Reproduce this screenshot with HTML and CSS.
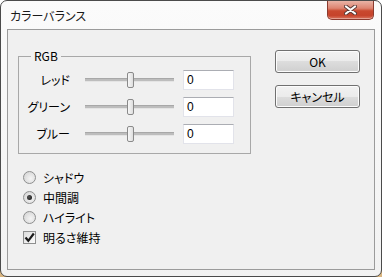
FILE: index.html
```html
<!DOCTYPE html>
<html lang="ja">
<head>
<meta charset="utf-8">
<link rel="stylesheet" href="styles.css">
</head>
<body>
<div class="window">
  <div class="titlebar">
    <span class="title">カラーバランス</span>
    <div class="close">
      <svg width="13" height="10" viewBox="0 0 13 10">
        <path d="M2 1.5 L11 8.5 M11 1.5 L2 8.5" stroke="#5a3a36" stroke-width="4" stroke-linecap="round"/>
        <path d="M2 1.5 L11 8.5 M11 1.5 L2 8.5" stroke="#ffffff" stroke-width="2.2" stroke-linecap="round"/>
      </svg>
    </div>
  </div>
  <div class="client">
    <div class="top">
      <fieldset class="group">
        <legend class="legend">RGB</legend>
        <div class="row">
          <span class="label">レッド</span>
          <div class="slider"><div class="track"></div><div class="thumb"></div></div>
          <div class="input">0</div>
        </div>
        <div class="row">
          <span class="label">グリーン</span>
          <div class="slider"><div class="track"></div><div class="thumb"></div></div>
          <div class="input">0</div>
        </div>
        <div class="row">
          <span class="label">ブルー</span>
          <div class="slider"><div class="track"></div><div class="thumb"></div></div>
          <div class="input">0</div>
        </div>
      </fieldset>
      <div class="buttons">
        <div class="btn">OK</div>
        <div class="btn">キャンセル</div>
      </div>
    </div>
    <div class="options">
      <div class="opt"><span class="radio"></span><span class="otext">シャドウ</span></div>
      <div class="opt"><span class="radio on"></span><span class="otext">中間調</span></div>
      <div class="opt"><span class="radio"></span><span class="otext">ハイライト</span></div>
      <div class="opt"><span class="check">
        <svg width="11" height="11" viewBox="0 0 11 11"><path d="M1.5 5.5 L4.3 8.8 L9.8 1.5" fill="none" stroke="#1a1a1a" stroke-width="2.2"/></svg>
      </span><span class="otext">明るさ維持</span></div>
    </div>
  </div>
</div>
</body>
</html>
```

FILE: styles.css
```css
html {
  background: linear-gradient(#ffffff 0%, #ffffff 50%, #d9b47e 100%);
}
body {
  margin: 0;
  font-family: "Noto Sans CJK JP", "Liberation Sans", sans-serif;
  font-size: 12px;
  color: #000;
  font-feature-settings: "palt";
}
.window {
  width: 382px;
  height: 277px;
  box-sizing: border-box;
  border: 1px solid #4b4b4b;
  border-radius: 7px;
  background: linear-gradient(#fbfbfb, #f2f2f2);
  padding: 0 6px 6px 6px;
  display: flex;
  flex-direction: column;
}
.titlebar {
  height: 28px;
  display: flex;
  align-items: flex-start;
  justify-content: space-between;
}
.title {
  align-self: center;
  margin-left: 3px;
  margin-top: 1px;
  font-size: 12px;
  line-height: 16px;
  color: #1a1a1a;
}
.close {
  width: 45px;
  height: 18px;
  margin-right: 1px;
  border: 1px solid #8a3b2f;
  border-top: none;
  border-radius: 0 0 5px 5px;
  background: linear-gradient(#e9b3a6 0%, #dd8471 40%, #c9492f 55%, #c6432b 80%, #d9755f 100%);
  display: flex;
  align-items: center;
  justify-content: center;
  box-shadow: inset 0 -1px 0 rgba(255,255,255,0.35);
}
.close svg { display: block; }
.client {
  flex: 1;
  border: 1px solid #9b9b9b;
  background: #f0f0f0;
  display: flex;
  flex-direction: column;
}
.top {
  display: flex;
  align-items: flex-start;
}
.group {
  margin: 19px 0 0 10px;
  padding: 7px 16px 9px 0;
  width: 233px;
  box-sizing: border-box;
  border: 1px solid #a8a8a8;
  display: flex;
  flex-direction: column;
  gap: 7px;
  min-width: 0;
}
.legend {
  margin-left: 12px;
  padding: 0 3px;
  line-height: 14px;
  color: #000;
}
.row {
  display: flex;
  align-items: center;
  height: 20px;
}
.label {
  width: 51px;
  text-align: right;
  margin-right: 15px;
  line-height: 14px;
}
.slider {
  width: 89px;
  height: 16px;
  margin-right: 9px;
  display: flex;
  align-items: center;
  justify-content: center;
}
.track {
  flex: 1;
  height: 2px;
  background: #bdbdbd;
  border-top: 1px solid #a8a8a8;
  border-bottom: 1px solid #e4e4e4;
}
.thumb {
  width: 5px;
  height: 14px;
  margin-left: -47px;
  margin-right: 40px;
  border: 1px solid #8a8a8a;
  border-radius: 2px;
  background: linear-gradient(90deg, #f7f7f7, #dedede);
}
.input {
  width: 51px;
  height: 20px;
  box-sizing: border-box;
  background: #fff;
  border: 1px solid #e2e3ea;
  border-top-color: #abadb3;
  border-left-color: #e2e3ea;
  padding: 0 0 0 3px;
  line-height: 18px;
  font-family: "Liberation Sans", sans-serif;
  font-size: 12px;
}
.buttons {
  margin: 20px 0 0 24px;
  display: flex;
  flex-direction: column;
  gap: 12px;
}
.btn {
  width: 85px;
  height: 23px;
  box-sizing: border-box;
  border: 1px solid #707070;
  border-radius: 3px;
  background: linear-gradient(#f2f2f2 0%, #ebebeb 50%, #dddddd 50%, #cfcfcf 100%);
  box-shadow: inset 0 0 0 1px #fcfcfc;
  display: flex;
  align-items: center;
  justify-content: center;
  line-height: 14px;
}
.options {
  margin: 17px 0 0 15px;
  display: flex;
  flex-direction: column;
  gap: 7px;
}
.opt {
  display: flex;
  align-items: center;
  height: 13px;
  gap: 7px;
}
.otext { line-height: 14px; }
.radio {
  width: 13px;
  height: 13px;
  box-sizing: border-box;
  border-radius: 50%;
  border: 1px solid #8e8f8f;
  background: radial-gradient(circle at 60% 60%, #f4f4f4 0%, #e4e4e4 45%, #d0d0d0 100%);
  display: flex;
  align-items: center;
  justify-content: center;
}
.radio.on::after {
  content: "";
  width: 5px;
  height: 5px;
  border-radius: 50%;
  background: radial-gradient(circle at 40% 40%, #555 0%, #111 100%);
}
.check {
  width: 13px;
  height: 13px;
  box-sizing: border-box;
  border: 1px solid #8e8f8f;
  background: linear-gradient(135deg, #dcdcdc, #fbfbfb);
  display: flex;
  align-items: center;
  justify-content: center;
}
.check svg { display: block; }
```
